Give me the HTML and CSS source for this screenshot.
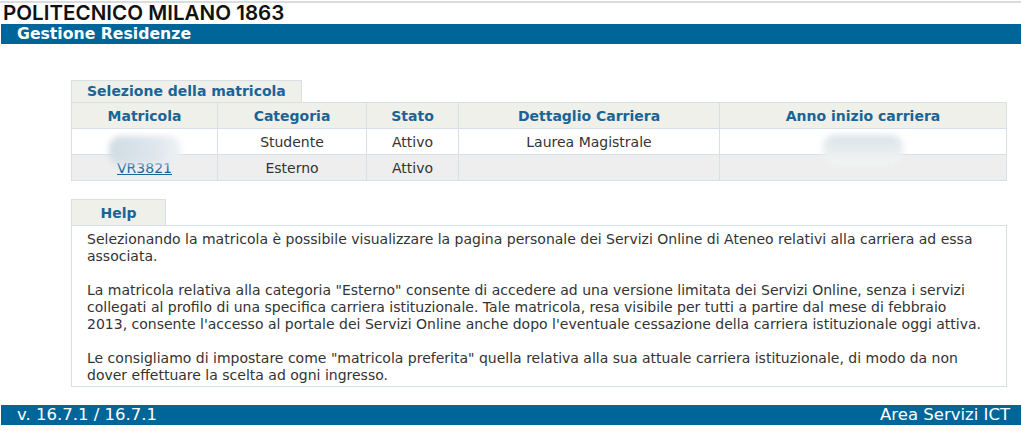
FILE: index.html
```html
<!DOCTYPE html>
<html lang="it">

<head>
  <meta charset="UTF-8">
  <title>Gestione Residenze</title>
  <link rel="stylesheet" href="styles.css">
</head>

<body>
  <div class="topline"></div>
  <div class="logo">POLITECNICO MILANO 1863</div>
  <div class="bar title">Gestione Residenze</div>

  <div class="content">
    <div class="tab">Selezione della matricola</div>
    <table class="grid">
      <tr>
        <th class="c1">Matricola</th>
        <th class="c2">Categoria</th>
        <th class="c3">Stato</th>
        <th class="c4">Dettaglio Carriera</th>
        <th class="c5">Anno inizio carriera</th>
      </tr>
      <tr>
        <td><span class="blur b1"></span></td>
        <td>Studente</td>
        <td>Attivo</td>
        <td>Laurea Magistrale</td>
        <td><span class="blur b2"></span></td>
      </tr>
      <tr class="alt">
        <td><a href="#">VR3821</a></td>
        <td>Esterno</td>
        <td>Attivo</td>
        <td></td>
        <td></td>
      </tr>
    </table>

    <div class="tab tab-help">Help</div>
    <div class="help">
      <p>Selezionando la matricola è possibile visualizzare la pagina personale dei Servizi Online di Ateneo relativi alla carriera ad essa associata.</p>
      <p>La matricola relativa alla categoria "Esterno" consente di accedere ad una versione limitata dei Servizi Online, senza i servizi collegati al profilo di una specifica carriera istituzionale. Tale matricola, resa visibile per tutti a partire dal mese di febbraio 2013, consente l'accesso al portale dei Servizi Online anche dopo l'eventuale cessazione della carriera istituzionale oggi attiva.</p>
      <p>Le consigliamo di impostare come "matricola preferita" quella relativa alla sua attuale carriera istituzionale, di modo da non dover effettuare la scelta ad ogni ingresso.</p>
    </div>
  </div>

  <div class="bar footer">
    <span>v. 16.7.1 / 16.7.1</span>
    <span>Area Servizi ICT</span>
  </div>
</body>

</html>
```

FILE: styles.css
```css
body {
  margin: 0;
  font-family: "DejaVu Sans", Verdana, sans-serif;
  font-size: 14px;
  color: #333;
}

.topline {
  height: 2px;
  margin-top: 1px;
  background-color: #dcdce0;
}

.logo {
  font-family: Inter, "Liberation Sans", sans-serif;
  font-weight: 600;
  font-size: 20.6px;
  line-height: 20px;
  height: 21px;
  padding-left: 3px;
  color: #111;
}

.bar {
  background-color: #006699;
  color: #fff;
  margin-left: 1px;
  height: 20px;
  line-height: 20px;
  padding-left: 16px;
}

.title {
  font-weight: bold;
  font-size: 15.7px;
}

.content {
  padding: 36px 14px 18px 71px;
}

.tab {
  box-sizing: border-box;
  width: 231px;
  height: 22px;
  line-height: 21px;
  background-color: #f0f0ea;
  border: 1px solid #d8dfe6;
  border-bottom: none;
  color: #1a6496;
  font-weight: bold;
  font-size: 14px;
  padding-left: 15px;
}

.tab-help {
  width: 95px;
  height: 26px;
  line-height: 26px;
  text-align: center;
  padding-left: 0;
  margin-top: 18px;
}

.grid {
  width: 936px;
  border-collapse: collapse;
}

.grid th,
.grid td {
  border: 1px solid #d8dfe6;
  height: 25px;
  padding: 0;
  text-align: center;
}

.grid th {
  background-color: #f0f0ea;
  color: #1a6496;
  font-size: 14px;
}

.c1 { width: 145px; }
.c2 { width: 148px; }
.c3 { width: 91px; }
.c4 { width: 260px; }

.grid .alt td {
  background-color: #eeeeee;
}

.grid a {
  color: #1a6496;
}

.blur {
  display: inline-block;
  vertical-align: middle;
  filter: blur(3px);
  border-radius: 12px;
}

.b1 {
  width: 72px;
  height: 28px;
  margin-bottom: -14px;
  background: linear-gradient(90deg, #cfdbe3, #dde6ec 60%, #eef2f4);
}

.b2 {
  width: 80px;
  height: 30px;
  margin-top: 4px;
  margin-bottom: -12px;
  background: linear-gradient(180deg, #d9e2e8, #ebeeef 60%, #f4f4f4);
}

.help {
  box-sizing: border-box;
  width: 936px;
  border: 1px solid #d8dfe6;
  padding: 5px 22px 2px 15px;
  line-height: 17px;
}

.help p {
  margin: 0 0 17px 0;
}

.help p:last-child {
  margin-bottom: 0;
}

.footer {
  display: flex;
  justify-content: space-between;
  font-size: 16.5px;
  padding-right: 11px;
}
```
